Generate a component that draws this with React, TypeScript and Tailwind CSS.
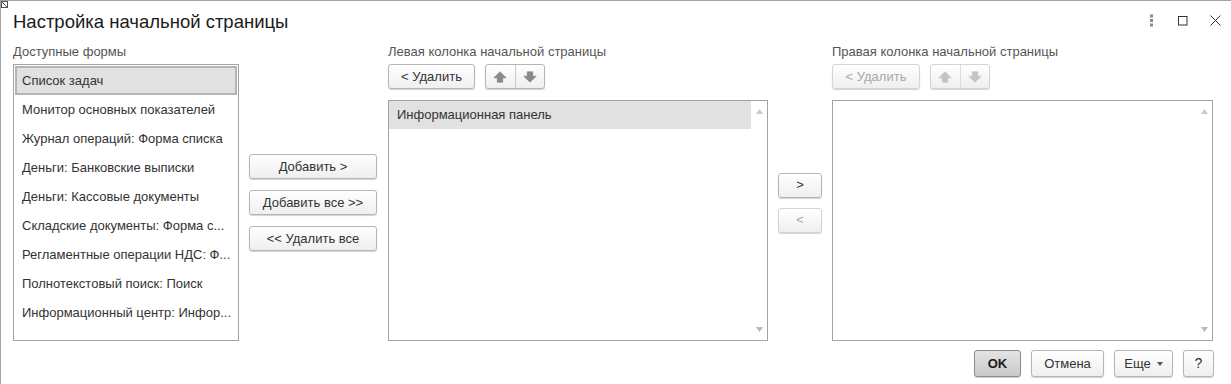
import React from "react";

const font = { fontFamily: '"Liberation Sans", Arial, sans-serif' };

function Btn({
  children,
  disabled,
  className = "",
}: {
  children: React.ReactNode;
  disabled?: boolean;
  className?: string;
}) {
  return (
    <div
      className={
        "flex items-center justify-center rounded-[3px] border bg-gradient-to-b from-white to-[#efefef] text-[13px] shadow-[0_1px_1px_rgba(0,0,0,0.18)] " +
        (disabled
          ? "border-[#d4d4d4] text-[#a8a8a8]"
          : "border-[#b5b5b5] text-[#333333]") +
        " " +
        className
      }
    >
      {children}
    </div>
  );
}

function Arrow({ up, disabled }: { up?: boolean; disabled?: boolean }) {
  const c = disabled ? "#c4c4c4" : "#8a8a8a";
  const s = disabled ? "#bdbdbd" : "#7a7a7a";
  return (
    <svg width="14" height="12" viewBox="0 0 14 12" style={{ transform: up ? "none" : "rotate(180deg)" }}>
      <path d="M7 0.8 L13.2 6.8 L9.7 6.8 L9.7 11.2 L4.3 11.2 L4.3 6.8 L0.8 6.8 Z" fill={c} stroke={s} strokeWidth="0.6" strokeLinejoin="round" />
    </svg>
  );
}

function UpDown({ disabled }: { disabled?: boolean }) {
  return (
    <div
      className={
        "flex h-[25px] w-[60px] rounded-[3px] border bg-gradient-to-b from-white to-[#efefef] shadow-[0_1px_1px_rgba(0,0,0,0.18)] " +
        (disabled ? "border-[#d4d4d4]" : "border-[#b5b5b5]")
      }
    >
      <div className={"flex flex-1 items-center justify-center border-r " + (disabled ? "border-[#dcdcdc]" : "border-[#c8c8c8]")}>
        <Arrow up disabled={disabled} />
      </div>
      <div className="flex flex-1 items-center justify-center">
        <Arrow disabled={disabled} />
      </div>
    </div>
  );
}

function ScrollArrows() {
  return (
    <div className="flex w-[16px] flex-col items-center justify-between py-[8px]">
      <svg width="7" height="5" viewBox="0 0 7 5">
        <path d="M3.5 0 L7 5 L0 5 Z" fill="#c8c8c8" />
      </svg>
      <svg width="7" height="5" viewBox="0 0 7 5">
        <path d="M0 0 L7 0 L3.5 5 Z" fill="#b8b8b8" />
      </svg>
    </div>
  );
}

const items = [
  "Список задач",
  "Монитор основных показателей",
  "Журнал операций: Форма списка",
  "Деньги: Банковские выписки",
  "Деньги: Кассовые документы",
  "Складские документы: Форма с...",
  "Регламентные операции НДС: Ф...",
  "Полнотекстовый поиск: Поиск",
  "Информационный центр: Инфор...",
];

export default function App() {
  return (
    <div
      style={font}
      className="relative flex h-[384px] w-[1231px] flex-col overflow-hidden border-l border-t border-[#a3a3a3] bg-white text-[#333333]"
    >
      {/* corner icon */}
      <svg className="absolute left-0 top-0" width="8" height="8" viewBox="0 0 8 8">
        <rect x="0.5" y="0.5" width="6" height="6" fill="white" stroke="#555" strokeWidth="1" />
        <path d="M1 1 L6 6" stroke="#555" strokeWidth="1" />
      </svg>

      {/* header */}
      <div className="flex h-[33px] items-start pl-[12px] pr-[10px] pt-[11px]">
        <div className="text-[18.5px] leading-[19px] text-[#1a1a1a]">Настройка начальной страницы</div>
        <div className="ml-auto flex items-center gap-[22px] pt-[2px]">
          <svg width="9" height="13" viewBox="0 0 9 13">
            <rect x="3" y="0.5" width="3" height="3" fill="#8a8a8a" />
            <rect x="3" y="5" width="3" height="3" fill="#8a8a8a" />
            <rect x="3" y="9.5" width="3" height="3" fill="#8a8a8a" />
          </svg>
          <svg width="10" height="10" viewBox="0 0 10 10">
            <rect x="0.5" y="0.5" width="8.5" height="8.5" fill="none" stroke="#333" strokeWidth="1" />
          </svg>
          <svg width="11" height="11" viewBox="0 0 11 11">
            <path d="M0.5 0.5 L10.5 10.5 M10.5 0.5 L0.5 10.5" stroke="#333" strokeWidth="1" />
          </svg>
        </div>
      </div>

      {/* body */}
      <div className="flex pl-[12px] pt-[10px]">
        {/* available */}
        <div className="flex w-[226px] flex-col">
          <div className="h-[20px] text-[13px] leading-[16px] text-[#555555]">Доступные формы</div>
          <div className="h-[277px] border border-[#a3a3a3] px-[1px] pt-[1px]">
            {items.map((t, i) => (
              <div
                key={t}
                className={
                  "flex h-[29px] items-center whitespace-nowrap text-[13px] text-[#333333] " +
                  (i === 0 ? "border-2 border-[#b4b4b4] bg-[#e1e1e1] pl-[5px]" : "pl-[7px]")
                }
              >
                {t}
              </div>
            ))}
          </div>
        </div>

        {/* add/remove buttons */}
        <div className="ml-[10px] flex w-[128px] flex-col justify-center gap-[11px] pt-[20px]">
          <Btn className="h-[25px]">Добавить &gt;</Btn>
          <Btn className="h-[25px]">Добавить все &gt;&gt;</Btn>
          <Btn className="h-[25px]">&lt;&lt; Удалить все</Btn>
        </div>

        {/* left column */}
        <div className="ml-[11px] flex w-[380px] flex-col">
          <div className="h-[20px] text-[13px] leading-[16px] text-[#555555]">Левая колонка начальной страницы</div>
          <div className="flex h-[36px] gap-[10px]">
            <Btn className="h-[25px] w-[87px]">&lt; Удалить</Btn>
            <UpDown />
          </div>
          <div className="flex h-[241px] border border-[#a3a3a3]">
            <div className="flex-1">
              <div className="flex h-[28px] items-center bg-[#e1e1e1] pl-[8px] text-[13px] text-[#333333]">
                Информационная панель
              </div>
            </div>
            <ScrollArrows />
          </div>
        </div>

        {/* move buttons */}
        <div className="ml-[10px] flex w-[44px] flex-col justify-center gap-[10px] pt-[20px]">
          <Btn className="h-[25px]">&gt;</Btn>
          <Btn className="h-[25px]" disabled>
            &lt;
          </Btn>
        </div>

        {/* right column */}
        <div className="ml-[10px] flex w-[381px] flex-col">
          <div className="h-[20px] text-[13px] leading-[16px] text-[#555555]">Правая колонка начальной страницы</div>
          <div className="flex h-[36px] gap-[10px]">
            <Btn className="h-[25px] w-[88px]" disabled>
              &lt; Удалить
            </Btn>
            <UpDown disabled />
          </div>
          <div className="flex h-[241px] border border-[#a3a3a3]">
            <div className="flex-1" />
            <ScrollArrows />
          </div>
        </div>
      </div>

      {/* footer */}
      <div className="flex justify-end gap-[10px] pr-[17px] pt-[9px]">
        <div className="flex h-[27px] w-[47px] items-center justify-center rounded-[3px] border border-[#8c8c8c] bg-gradient-to-b from-[#e4e4e4] to-[#c9c9c9] text-[13px] font-bold text-[#1a1a1a] shadow-[0_1px_1px_rgba(0,0,0,0.2)]">
          OK
        </div>
        <Btn className="h-[27px] w-[73px]">Отмена</Btn>
        <Btn className="h-[27px] w-[59px] gap-[6px]">
          <span>Еще</span>
          <svg width="6" height="4" viewBox="0 0 6 4">
            <path d="M0 0 L6 0 L3 4 Z" fill="#555" />
          </svg>
        </Btn>
        <Btn className="h-[27px] w-[31px] text-[14px] text-[#1a1a1a]">?</Btn>
      </div>
    </div>
  );
}
